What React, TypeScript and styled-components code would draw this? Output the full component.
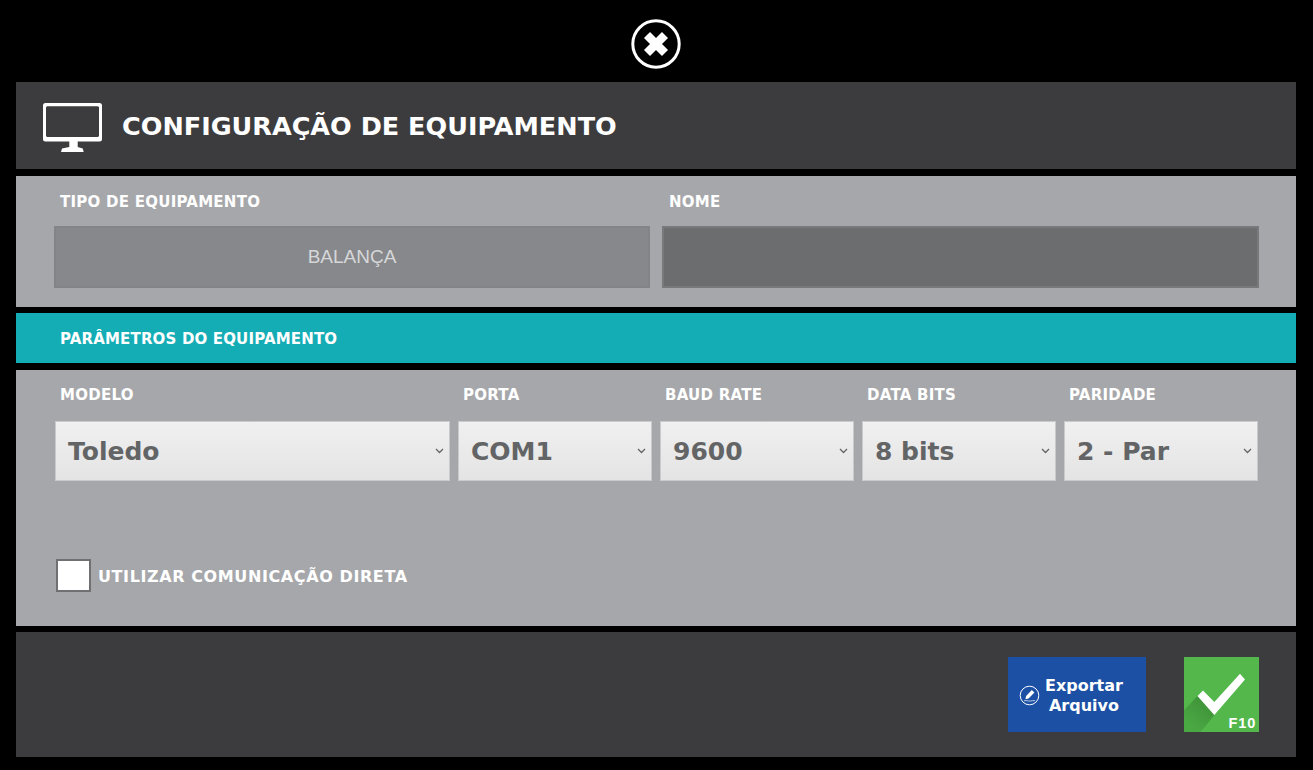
import styled, { createGlobalStyle } from 'styled-components';

const GlobalStyle = createGlobalStyle`
  html, body {
    margin: 0;
    background: #000;
    font-family: "DejaVu Sans", Verdana, sans-serif;
  }
`;

const Page = styled.div`
  width: 1313px;
  height: 770px;
  box-sizing: border-box;
  padding: 0 17px 13px 16px;
  background: #000;
  display: flex;
  flex-direction: column;
  overflow: hidden;
`;

const CloseRow = styled.div`
  height: 82px;
  flex: none;
  display: flex;
  justify-content: center;
  align-items: flex-start;
  padding-top: 19px;
  box-sizing: border-box;
`;

const CloseButton = styled.button`
  width: 50px;
  height: 50px;
  padding: 0;
  border: 0;
  background: none;
`;

const Header = styled.header`
  height: 87px;
  flex: none;
  background: #3c3c3e;
  display: flex;
  align-items: center;
  gap: 20px;
  padding-left: 27px;
`;

const MonitorIcon = styled.svg`
  margin-top: 5px;
`;

const Title = styled.h1`
  margin: 0;
  color: #fff;
  font-size: 25.5px;
  font-weight: 700;
`;

const GrayPanel = styled.section<{ $height: number; $top: number }>`
  height: ${(p) => p.$height}px;
  margin-top: ${(p) => p.$top}px;
  flex: none;
  background: #a6a7aa;
  box-sizing: border-box;
  padding: 0 37px 0 38px;
`;

const TwoColumns = styled.div`
  display: grid;
  grid-template-columns: 596px 597px;
  column-gap: 12px;
`;

const FiveColumns = styled.div`
  display: grid;
  grid-template-columns: 395px repeat(4, 194px);
  column-gap: 8px;
  padding-left: 1px;
`;

const Label = styled.label<{ $inset?: number }>`
  display: block;
  height: 50px;
  padding: 18px 0 0 ${(p) => p.$inset ?? 6}px;
  box-sizing: border-box;
  color: #fff;
  font-size: 15px;
  font-weight: 700;
  letter-spacing: 0.25px;
  line-height: 17px;
  white-space: nowrap;
`;

const ParamLabel = styled(Label)`
  height: 51px;
  padding-top: 17px;
`;

const ReadonlyField = styled.div`
  height: 62px;
  box-sizing: border-box;
  background: #87888b;
  border: 2px solid #838487;
  color: #d6d7d9;
  font-family: "Liberation Sans", Arial, sans-serif;
  font-size: 19px;
  display: flex;
  align-items: center;
  justify-content: center;
`;

const NameField = styled.div`
  height: 62px;
  box-sizing: border-box;
  background: #6c6d6f;
  border: 2px solid #78797b;
`;

const SectionBar = styled.div`
  height: 50px;
  box-sizing: border-box;
  margin-top: 6px;
  flex: none;
  background: #14acb5;
  color: #fff;
  font-size: 15px;
  font-weight: 700;
  letter-spacing: 0.16px;
  display: flex;
  align-items: center;
  padding: 2px 0 0 44px;
`;

const SelectBox = styled.div`
  height: 60px;
  box-sizing: border-box;
  border: 1px solid #c9cacb;
  background: linear-gradient(#f0f0f0, #e4e4e4);
  color: #636466;
  font-size: 25px;
  font-weight: 700;
  display: flex;
  align-items: center;
  justify-content: space-between;
  padding: 0 5px 0 12px;
`;

const CheckRow = styled.div`
  display: flex;
  align-items: center;
  gap: 7px;
  margin: 78px 0 0 2px;
`;

const CheckBox = styled.span`
  width: 35px;
  height: 33px;
  box-sizing: border-box;
  background: #fff;
  border: 2px solid #707072;
`;

const CheckLabel = styled.span`
  color: #fff;
  font-size: 16px;
  font-weight: 700;
  letter-spacing: 0.6px;
  margin-top: 1px;
`;

const Footer = styled.footer`
  height: 125px;
  box-sizing: border-box;
  margin-top: 6px;
  flex: none;
  background: #3c3c3e;
  display: flex;
  justify-content: flex-end;
  align-items: flex-start;
  gap: 38px;
  padding: 25px 37px 0 0;
`;

const ExportButton = styled.button`
  width: 138px;
  height: 75px;
  border: 0;
  padding: 2px 0 0 11px;
  background: #1c50a4;
  color: #fff;
  font-family: inherit;
  font-size: 16px;
  font-weight: 700;
  line-height: 20px;
  display: flex;
  align-items: center;
  gap: 5px;
`;

const ExportText = styled.span`
  text-align: center;
`;

const ConfirmButton = styled.button`
  position: relative;
  width: 75px;
  height: 75px;
  border: 0;
  padding: 0;
  background: #53b74b;
  overflow: hidden;
`;

const ConfirmIcon = styled.svg`
  display: block;
`;

const KeyHint = styled.span`
  position: absolute;
  right: 3px;
  bottom: 1px;
  color: #fff;
  font-size: 14.5px;
  font-weight: 700;
  letter-spacing: 0.8px;
  line-height: 16px;
`;

const Chevron = () => (
  <svg width="9" height="6" viewBox="0 0 9 6">
    <path d="M1 1l3.5 3.5L8 1" fill="none" stroke="#636466" strokeWidth="1.3" />
  </svg>
);

const Select = ({ value }: { value: string }) => (
  <SelectBox>
    {value}
    <Chevron />
  </SelectBox>
);

const parametros = [
  { label: 'MODELO', value: 'Toledo' },
  { label: 'PORTA', value: 'COM1' },
  { label: 'BAUD RATE', value: '9600' },
  { label: 'DATA BITS', value: '8 bits' },
  { label: 'PARIDADE', value: '2 - Par' },
];

const App = () => (
  <Page>
    <GlobalStyle />
    <CloseRow>
      <CloseButton aria-label="Fechar">
        <svg width="50" height="50" viewBox="0 0 50 50">
          <circle cx="25" cy="25" r="23.200" fill="none" stroke="#fff" strokeWidth="3" />
          <path d="M16 16L34 34M34 16L16 34" stroke="#fff" strokeWidth="8.500" />
        </svg>
      </CloseButton>
    </CloseRow>

    <Header>
      <MonitorIcon width="59" height="50" viewBox="0 0 59 50">
        <path
          fillRule="evenodd"
          fill="#fff"
          d="M2.500 0h54A2.500 2.500 0 0 1 59 2.500v33.500a2.500 2.500 0 0 1-2.500 2.500h-54A2.500 2.500 0 0 1 0 36V2.500A2.500 2.500 0 0 1 2.500 0zM4 3.300L3 4.300V33l1 1h51l1-1V4.300l-1-1z"
        />
        <path fill="#fff" d="M26.300 38h8.400v6l5 1.500 1 3.500H18l1-3.500 7.300-1.500z" />
      </MonitorIcon>
      <Title>CONFIGURAÇÃO DE EQUIPAMENTO</Title>
    </Header>

    <GrayPanel $height={131} $top={7}>
      <TwoColumns>
        <div>
          <Label>TIPO DE EQUIPAMENTO</Label>
          <ReadonlyField>BALANÇA</ReadonlyField>
        </div>
        <div>
          <Label $inset={7}>NOME</Label>
          <NameField />
        </div>
      </TwoColumns>
    </GrayPanel>

    <SectionBar>PARÂMETROS DO EQUIPAMENTO</SectionBar>

    <GrayPanel $height={256} $top={7}>
      <FiveColumns>
        {parametros.map((p) => (
          <div key={p.label}>
            <ParamLabel $inset={5}>{p.label}</ParamLabel>
            <Select value={p.value} />
          </div>
        ))}
      </FiveColumns>
      <CheckRow>
        <CheckBox />
        <CheckLabel>UTILIZAR COMUNICAÇÃO DIRETA</CheckLabel>
      </CheckRow>
    </GrayPanel>

    <Footer>
      <ExportButton>
        <svg width="21" height="21" viewBox="0 0 21 21">
          <circle cx="10.500" cy="10.500" r="9.300" fill="none" stroke="#fff" strokeWidth="1" />
          <path fill="#fff" d="M12.800 5l2.600 2.600-5.800 5.800-3.200.9.700-3.300z" />
          <path d="M5 15.800c3-.8 4 .6 6.500.2 1.500-.2 3-.5 4.500-.4" fill="none" stroke="#fff" strokeWidth="0.700" />
        </svg>
        <ExportText>
          Exportar
          <br />
          Arquivo
        </ExportText>
      </ExportButton>
      <ConfirmButton>
        <ConfirmIcon width="75" height="75" viewBox="0 0 75 75">
          <defs>
            <linearGradient id="sombra" x1="0.750" y1="0.150" x2="0.250" y2="0.850">
              <stop offset="0" stopColor="#3f9339" />
              <stop offset="1" stopColor="#4aa843" />
            </linearGradient>
          </defs>
          <path fill="url(#sombra)" d="M13.500 39L0 53.300V75h16.500L30.300 58z" />
          <path fill="#3f9339" d="M30.300 45L54 20l1.500 2.500L32 48z" />
          <path fill="#fff" d="M13.500 39L19 33.500L30.300 45L56 16.700L61 22.500L30.300 58z" />
        </ConfirmIcon>
        <KeyHint>F10</KeyHint>
      </ConfirmButton>
    </Footer>
  </Page>
);

export default App;
